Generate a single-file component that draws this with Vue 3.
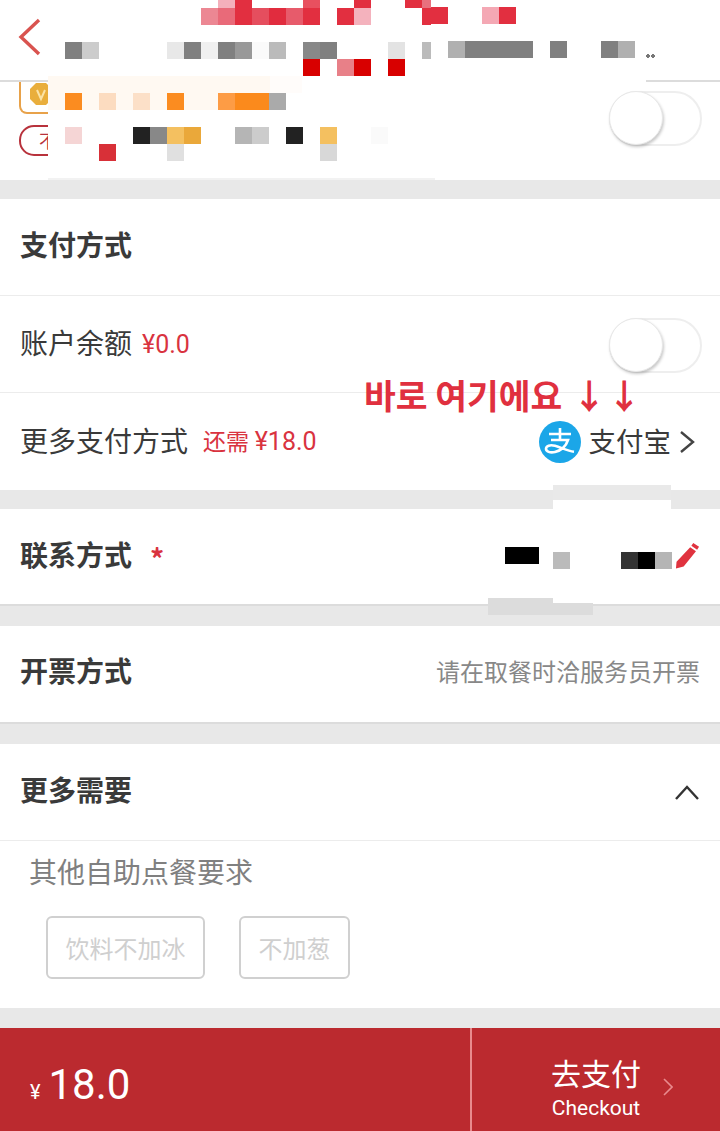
<template>
  <div class="page">
    <header class="topbar">
      <svg class="back" width="24" height="38" viewBox="0 0 24 38">
        <path d="M21 2 L3 19 L21 36" fill="none" stroke="#d9534f" stroke-width="3.4" />
      </svg>
    </header>

    <section class="coupon">
      <div class="coupon-tags">
        <div class="tag-gold">
          <svg width="24" height="24" viewBox="0 0 24 24">
            <path d="M7 1h10l6 6v10l-6 6H7l-6-6V7z" fill="#e9ae3c" />
            <path d="M8 8l4 9 4-9" fill="none" stroke="#fbe3a6" stroke-width="2" />
          </svg>
        </div>
        <div class="tag-red">不</div>
      </div>
      <span class="toggle"><span class="knob"></span></span>
    </section>

    <section class="row title-row first">
      <h3>支付方式</h3>
    </section>
    <section class="row">
      <span class="label">账户余额</span>
      <span class="price balance">¥0.0</span>
      <span class="spacer"></span>
      <span class="toggle low"><span class="knob"></span></span>
    </section>
    <section class="row more-pay">
      <span class="label">更多支付方式</span>
      <span class="price need">还需 <span class="num">¥18.0</span></span>
      <span class="spacer"></span>
      <svg class="alipay" width="42" height="42" viewBox="0 0 42 42">
        <circle cx="21" cy="21" r="21" fill="#1ba6e8" />
        <path d="M10 13h22M21 7v12M12 19h17c-2 6-7 10.500-13 12-5 1.200-9-.5-9-3.200 0-3 4-4.300 9-3 6 1.500 12 5 19 6" fill="none" stroke="#fff" stroke-width="2.600" />
      </svg>
      <span class="alipay-name">支付宝</span>
      <svg class="chev" width="16" height="24" viewBox="0 0 16 24">
        <path d="M2 2l12 10L2 22" fill="none" stroke="#444" stroke-width="2.400" />
      </svg>
    </section>

    <section class="row title-row contact">
      <h3>联系方式</h3>
      <span class="star">*</span>
      <span class="spacer"></span>
      <svg class="pencil" width="25" height="28" viewBox="0 0 26 28">
        <path d="M19 1.500l6 4-2 3-6-4zM15.800 6l6 4L9 26 1 28l.6-7z" fill="#e0333f" />
      </svg>
    </section>

    <section class="row title-row invoice">
      <h3>开票方式</h3>
      <span class="spacer"></span>
      <span class="hint">请在取餐时洽服务员开票</span>
    </section>

    <section class="row title-row extra">
      <h3>更多需要</h3>
      <span class="spacer"></span>
      <svg class="chev-up" width="26" height="16" viewBox="0 0 26 16">
        <path d="M2 15L13 3l11 12" fill="none" stroke="#333" stroke-width="2.400" />
      </svg>
    </section>

    <section class="notes">
      <p class="notes-title">其他自助点餐要求</p>
      <div class="chips">
        <span class="chip">饮料不加冰</span>
        <span class="chip">不加葱</span>
      </div>
    </section>

    <footer class="checkout">
      <div class="total"><span class="yen">¥</span><span class="amount">18.0</span></div>
      <div class="pay">
        <div class="pay-text">
          <span class="pay-cn">去支付</span>
          <span class="pay-en">Checkout</span>
        </div>
        <svg width="10" height="18" viewBox="0 0 10 18">
          <path d="M1 1l8 8-8 8" fill="none" stroke="#e98a8d" stroke-width="1.600" />
        </svg>
      </div>
    </footer>

    <!-- redacted areas over the content -->
    <i v-for="(b, i) in blocks" :key="i" class="block" :style="blockStyle(b)"></i>
    <span class="note">바로 여기에요<span class="arrows">↓↓</span></span>
    <i class="dots"></i>
  </div>
</template>

<script setup>
// [x, y, width, height, colour]
const patches = [
  [48, 76, 598, 14, '#ffffff'],
  [48, 76, 222, 34, '#fff9f2'],
  [270, 76, 32, 17, '#fffcfa'],
  [48, 110, 387, 68, '#ffffff'],
  [48, 178, 387, 2, '#f2f2f2'],
  [553, 485, 118, 15, '#e9e9e9'],
  [553, 500, 118, 103, '#ffffff'],
  [488, 598, 65, 17, '#dcdcdc'],
  [553, 603, 40, 12, '#dcdcdc']
]

const cell = (x, y, colour, w = 17) => [x, y, w, 17, colour]

const mosaic = [
  cell(218, -9, '#f4b0bb'), cell(235, -9, '#e22f40'), cell(303, -9, '#e8505f'),
  cell(354, -9, '#e22f40'), cell(405, -9, '#e22f40'), cell(422, -9, '#e8707e', 9),
  cell(201, 8, '#ec8793'), cell(218, 8, '#e96a79'), cell(235, 8, '#e22f40'),
  cell(252, 8, '#e54e5e'), cell(269, 8, '#e12c3e'), cell(286, 8, '#e75b6b'),
  cell(303, 8, '#e22f40'), cell(337, 8, '#e22f40'), cell(354, 8, '#f4b2bd'),
  cell(422, 8, '#e22f40', 9), cell(431, 7, '#e22f40'), cell(482, 7, '#f4a8b4'),
  cell(499, 7, '#e22f40'),
  cell(65, 42, '#808080'), cell(82, 42, '#cccccc'), cell(167, 42, '#e8e8e8'),
  cell(184, 42, '#808080'), cell(201, 42, '#f0f0f0'), cell(218, 42, '#808080'),
  cell(235, 42, '#999999'), cell(252, 42, '#fafafa'), cell(269, 42, '#bbbbbb'),
  cell(303, 42, '#888888'), cell(320, 42, '#808080'), cell(388, 42, '#e3e3e3'),
  cell(422, 42, '#bbbbbb', 9), cell(448, 41, '#b0b0b0'), cell(465, 41, '#808080', 68),
  cell(550, 41, '#808080'), cell(601, 41, '#808080'), cell(618, 41, '#b0b0b0'),
  cell(303, 59, '#d80000'), cell(337, 59, '#e88088'), cell(354, 59, '#d80000'),
  cell(388, 59, '#d80000'),
  cell(65, 93, '#fb8c20'), cell(99, 93, '#fcdcc0'), cell(133, 93, '#fce0c8'),
  cell(167, 93, '#fb8c20'), cell(218, 93, '#fd9c45'), cell(235, 93, '#fb8a1c', 34),
  cell(269, 93, '#aaaaaa'),
  cell(65, 127, '#f5d5d5'), cell(133, 127, '#222222'), cell(150, 127, '#888888'),
  cell(167, 127, '#f4c060'), cell(184, 127, '#eaa83a'), cell(235, 127, '#b5b5b5'),
  cell(252, 127, '#cccccc'), cell(286, 127, '#222222'), cell(320, 127, '#f4c060'),
  cell(371, 127, '#fafafa'),
  cell(99, 144, '#d83038'), cell(167, 144, '#e0e0e0'), cell(320, 144, '#d8d8d8'),
  cell(505, 547, '#000000', 34), cell(553, 552, '#bbbbbb'), cell(621, 552, '#333333'),
  cell(638, 552, '#000000'), cell(655, 552, '#b5b5b5')
]

const blocks = [...patches, ...mosaic]

const blockStyle = ([x, y, w, h, colour]) => ({
  left: x + 'px',
  top: y + 'px',
  width: w + 'px',
  height: h + 'px',
  background: colour
})
</script>

<style>
body {
  margin: 0;
}
</style>

<style scoped>
.page {
  position: relative;
  display: flex;
  flex-direction: column;
  width: 720px;
  height: 1131px;
  overflow: hidden;
  background: #e8e8e8;
  color: #333;
  font-family: "Noto Sans CJK SC", "Noto Sans", sans-serif;
}

.topbar {
  box-sizing: border-box;
  height: 82px;
  padding: 18px 0 0 18px;
  background: #fff;
  border-bottom: 2px solid #dcdcdc;
}

.back {
  display: block;
}

.coupon {
  display: flex;
  align-items: flex-start;
  justify-content: space-between;
  box-sizing: border-box;
  height: 98px;
  padding: 9px 18px 0 19px;
  background: #fff;
}

.coupon-tags {
  display: flex;
  flex-direction: column;
  gap: 11px;
  margin-top: -9px;
}

.tag-gold {
  box-sizing: border-box;
  width: 60px;
  height: 32px;
  padding-left: 8px;
  border: 2px solid #e8a24a;
  border-top: 0;
  border-radius: 0 0 0 8px;
}

.tag-gold svg {
  display: block;
}

.tag-red {
  box-sizing: border-box;
  width: 70px;
  height: 31px;
  padding-left: 18px;
  border: 2px solid #b8323c;
  border-radius: 15px;
  color: #b8323c;
  font-size: 18px;
  line-height: 27px;
}

.toggle {
  display: block;
  position: relative;
  box-sizing: border-box;
  width: 93px;
  height: 55px;
  border: 2px solid #eeeeee;
  border-radius: 28px;
  background: #fff;
}

.toggle.low {
  margin-top: 3px;
}

.knob {
  position: absolute;
  left: -2px;
  top: -2px;
  box-sizing: border-box;
  width: 54px;
  height: 54px;
  border: 1px solid #e8e8e8;
  border-radius: 50%;
  background: #fff;
  box-shadow: 1px 2px 3px rgba(0, 0, 0, 0.22);
}

.row {
  display: flex;
  align-items: center;
  box-sizing: border-box;
  height: 97px;
  padding: 0 18px 0 20px;
  background: #fff;
  border-bottom: 1px solid #ececec;
}

.first {
  margin-top: 19px;
}

.row h3 {
  margin: 0 0 6px;
  color: #3a3a3a;
  font-size: 28px;
  font-weight: 700;
}

.label {
  margin-bottom: 4px;
  color: #3a3a3a;
  font-size: 28px;
}

.price {
  color: #d9333f;
  font-family: Roboto, "Noto Sans CJK SC", sans-serif;
  font-size: 23px;
}

.balance {
  margin-left: 10px;
  font-size: 25px;
}

.need {
  margin-bottom: 4px;
  margin-left: 15px;
}

.num {
  font-size: 25px;
}

.spacer {
  flex: 1;
}

.more-pay {
  height: 97px;
  padding-right: 25px;
  border-bottom: 0;
}

.alipay {
  margin-right: 8px;
}

.alipay-name {
  margin-right: 8px;
  margin-bottom: 4px;
  color: #3a3a3a;
  font-size: 27.500px;
}

.contact {
  height: 97px;
  margin-top: 19px;
  border-bottom: 2px solid #dcdcdc;
  padding-right: 20px;
}

.star {
  margin-left: 18px;
  margin-top: 2px;
  color: #d9333f;
  font-size: 28px;
  font-weight: 700;
}

.pencil {
  margin-bottom: 4px;
}

.invoice {
  height: 98px;
  margin-top: 20px;
  padding-right: 20px;
  border-bottom: 2px solid #dcdcdc;
}

.invoice h3 {
  margin-bottom: 8px;
}

.hint {
  margin-bottom: 8px;
  color: #888;
  font-size: 24px;
}

.extra {
  height: 97px;
  margin-top: 20px;
  padding-right: 20px;
}

.notes {
  box-sizing: border-box;
  height: 167px;
  padding: 10px 29px 0;
  background: #fff;
}

.notes-title {
  margin: 0;
  color: #808080;
  font-size: 28px;
  line-height: 40px;
}

.chips {
  display: flex;
  gap: 34px;
  margin: 25px 0 0 17px;
}

.chip {
  box-sizing: border-box;
  height: 63px;
  padding: 0 17.500px;
  border: 2px solid #d0d0d0;
  border-radius: 6px;
  color: #cfcfcf;
  font-size: 24px;
  line-height: 59px;
}

.checkout {
  display: flex;
  height: 103px;
  margin-top: 20px;
  background: #bb2a2f;
  color: #fff;
}

.total {
  display: flex;
  align-items: baseline;
  box-sizing: border-box;
  width: 472px;
  padding: 32px 0 0 30px;
  border-right: 2px solid #e98a8d;
  font-family: Roboto, sans-serif;
}

.yen {
  margin-right: 8px;
  font-size: 20px;
}

.amount {
  font-size: 42px;
}

.pay {
  display: flex;
  flex: 1;
  align-items: center;
  justify-content: flex-end;
  gap: 22px;
  padding: 14px 47px 0 0;
}

.pay-text {
  display: flex;
  flex-direction: column;
  align-items: center;
}

.pay-cn {
  font-size: 30px;
  line-height: 40px;
}

.pay-en {
  margin-top: 3px;
  font-family: Roboto, sans-serif;
  font-size: 21px;
  line-height: 26px;
}

.block {
  position: absolute;
  display: block;
}

.note {
  position: absolute;
  left: 364px;
  top: 371px;
  color: #e0303f;
  font-family: "Noto Sans CJK KR", sans-serif;
  font-size: 34.500px;
  font-weight: 700;
  line-height: 46px;
  white-space: nowrap;
}

.arrows {
  margin-left: 10px;
  font-size: 34px;
  letter-spacing: 1px;
}

.dots {
  position: absolute;
  left: 646px;
  top: 54px;
  width: 10px;
  height: 4px;
  background: radial-gradient(circle at 2px 2px, #777 2px, transparent 2px) 0 0 / 5px 4px repeat-x;
}
</style>
